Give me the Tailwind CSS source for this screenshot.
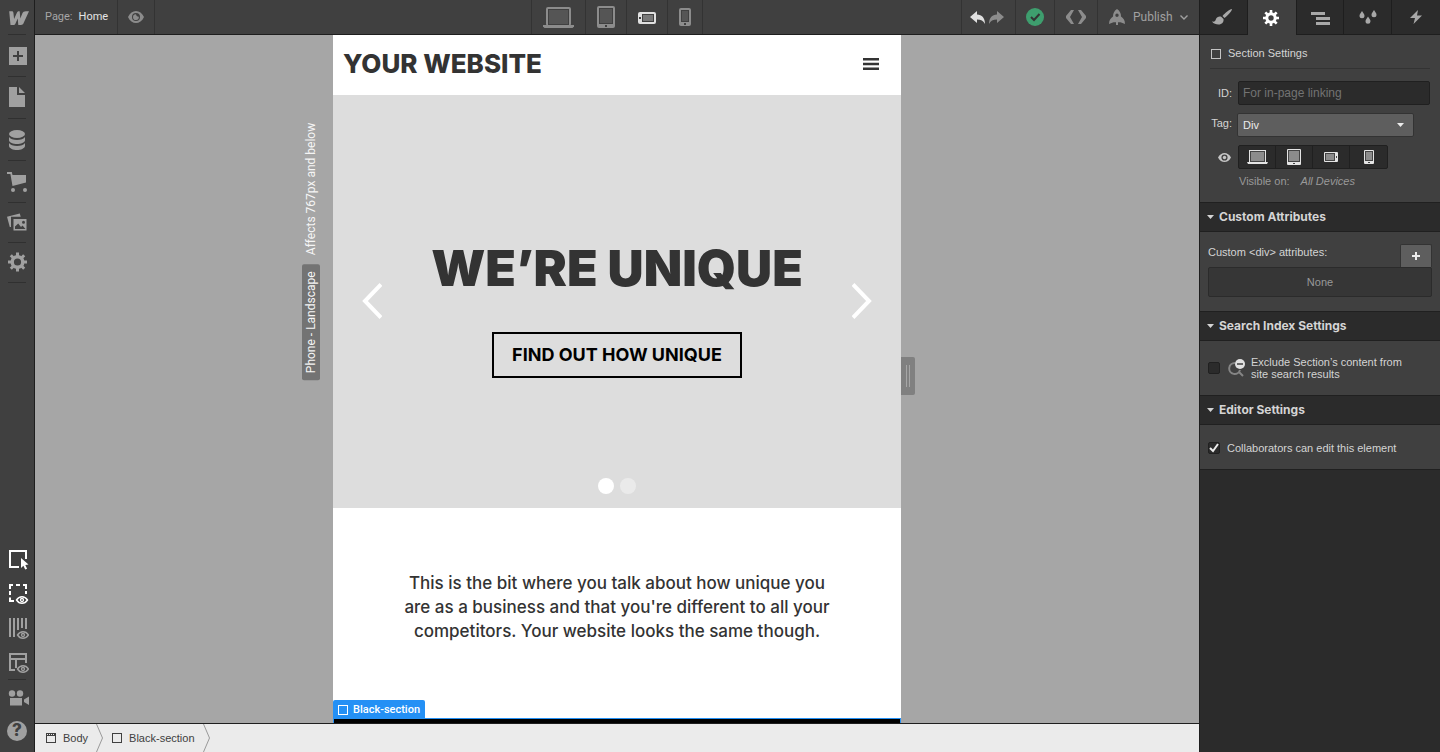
<!doctype html>
<html lang="en">
  <head>
    <meta charset="UTF-8" />
    <meta name="viewport" content="width=device-width, initial-scale=1.0" />
    <title>Designer</title>
    <script src="https://cdn.jsdelivr.net/npm/@tailwindcss/browser@4"></script>
  </head>
  <body class="flex h-screen overflow-hidden bg-[#404040] font-['Liberation_Sans',sans-serif] text-[11px] text-[#d4d4d4]">
    <!-- Left Sidebar -->
    <nav class="flex w-[35px] shrink-0 flex-col border-r border-[#1e1e1e] text-[#a0a0a0]" aria-label="Tools">
      <a href="#" class="flex h-[34px] items-center pl-[7px]" aria-label="Dashboard">
        <svg class="size-[22px]" viewBox="0 0 22 22" fill="currentColor">
          <path d="M2.2 5.2h2.6c1.1 0 1.5.6 1.6 1.5l.7 6.2 2.9-6.3c.5-1 1-1.4 2.2-1.4h.5l.6 7.4 2-5c.7-1.7 1.800-2.400 3.600-2.400H22l-5.600 12.400c-.5 1-1.300 1.400-2.400 1.400h-2.700l-.6-6.600-2.200 5.100c-.5 1.100-1.200 1.500-2.300 1.500H3.500z" />
        </svg>
      </a>
      <hr class="ml-2 w-[18px] border-[#303030]" />
      <button class="flex h-[41px] items-center pl-[7px]" aria-label="Add elements">
        <svg class="size-[22px]" viewBox="0 0 22 22" fill="currentColor">
          <path fill-rule="evenodd" d="M2 2h18v18H2zM10 6v4H6v2h4v4h2v-4h4v-2h-4V6z" />
        </svg>
      </button>
      <hr class="ml-2 w-[18px] border-[#303030]" />
      <button class="flex h-[41px] items-center pl-[7px]" aria-label="Pages">
        <svg class="size-[22px]" viewBox="0 0 22 22" fill="currentColor">
          <path d="M2 0h8v8h8v12H2zM12 0l6 6h-6z" />
        </svg>
      </button>
      <hr class="ml-2 w-[18px] border-[#303030]" />
      <button class="flex h-[41px] items-center pl-[7px]" aria-label="CMS collections">
        <svg class="size-[22px]" viewBox="0 0 22 22" fill="currentColor">
          <ellipse cx="10" cy="5" rx="8" ry="4" />
          <path d="M2 8c1 2 4.500 3 8 3s7-1 8-3v3.500C17.500 13.500 14 15 10 15s-7.500-1.500-8-3.500zM2 14c1 2 4.500 3 8 3s7-1 8-3v3c-.5 2.500-4 4-8 4s-7.500-1.500-8-4z" />
        </svg>
      </button>
      <hr class="ml-2 w-[18px] border-[#303030]" />
      <button class="flex h-[41px] items-center pl-[7px]" aria-label="Ecommerce">
        <svg class="size-[22px]" viewBox="0 0 22 22" fill="currentColor">
          <path d="M0 1h4.800l.7 3H19v7.500L5.500 15 3.400 3H0z" />
          <circle cx="6" cy="19" r="2" />
          <circle cx="18" cy="19" r="2" />
        </svg>
      </button>
      <hr class="ml-2 w-[18px] border-[#303030]" />
      <button class="flex h-[39px] items-center pl-[7px]" aria-label="Assets">
        <svg class="size-[22px]" viewBox="0 0 22 22" fill="currentColor">
          <path d="M0 4.800 12.800 1.500l.9 3.300H4v10.300H2.800z" />
          <path fill-rule="evenodd" d="M6.500 7h13v11.500h-13zM8 17h10.500l-3-3.500-1.500 1.500-2.800-3.500L8 14.500zM16.500 8.800a1.500 1.500 0 1 0 0 3 1.500 1.500 0 0 0 0-3z" />
        </svg>
      </button>
      <hr class="ml-2 w-[18px] border-[#303030]" />
      <button class="flex h-[39px] items-center pl-[7px]" aria-label="Project settings">
        <svg class="size-[22px]" viewBox="0 0 22 22">
          <circle cx="10.500" cy="10" r="5.300" fill="none" stroke="currentColor" stroke-width="3.400" />
          <path d="M10.500.5V4M10.500 16v3.500M1 10h3.500M16.500 10H20M3.800 3.300l2.400 2.400M14.800 14.300l2.400 2.400M17.200 3.300l-2.400 2.400M6.200 14.300l-2.400 2.400" stroke="currentColor" stroke-width="3" />
        </svg>
      </button>
      <hr class="ml-2 w-[18px] border-[#303030]" />

      <div class="mt-auto flex flex-col pb-1">
        <button class="flex h-[34px] items-center pl-[7px] text-white" aria-label="Select">
          <svg class="size-[22px]" viewBox="0 0 22 22">
            <path d="M12 18H3V2h16v8" fill="none" stroke="currentColor" stroke-width="2" />
            <path d="m14 9 7.500 6.500-3.200.4 1.800 3.800-1.900.9-1.800-3.900L14 19z" fill="currentColor" />
          </svg>
        </button>
        <button class="flex h-[34px] items-center pl-[7px] text-white" aria-label="Show element edges">
          <svg class="size-[22px]" viewBox="0 0 22 22" fill="none" stroke="currentColor">
            <path d="M3 6V2h3M9 2h4M16 2h3v4M3 8v4M19 8v3M3 14.500V18h4" stroke-width="2" />
            <path d="M9.500 17c2.800-4.300 8.200-4.300 11 0-2.800 4.300-8.200 4.300-11 0z" stroke-width="1.400" />
            <circle cx="15" cy="17" r="1.500" stroke-width="1.300" />
          </svg>
        </button>
        <button class="flex h-[34px] items-center pl-[7px]" aria-label="Show grid overlay">
          <svg class="size-[22px]" viewBox="0 0 22 22" fill="none" stroke="currentColor">
            <path d="M3 1v19M7 1v19M11 1v12M15 1v10M19 1v11" stroke-width="2" />
            <path d="M10.500 18c2.800-4.300 8.200-4.300 11 0-2.800 4.300-8.200 4.300-11 0z" stroke-width="1.400" />
            <circle cx="16" cy="18" r="1.500" stroke-width="1.300" />
          </svg>
        </button>
        <button class="flex h-[34px] items-center pl-[7px]" aria-label="Show layout">
          <svg class="size-[22px]" viewBox="0 0 22 22" fill="none" stroke="currentColor">
            <path d="M8 19H3V3h16v9M3 8h16M9 8v9" stroke-width="2" />
            <path d="M10.500 18c2.800-4.300 8.200-4.300 11 0-2.800 4.300-8.200 4.300-11 0z" stroke-width="1.400" />
            <circle cx="16" cy="18" r="1.500" stroke-width="1.300" />
          </svg>
        </button>
        <hr class="ml-2 w-[18px] border-[#303030]" />
        <button class="flex h-[34px] items-center pl-[7px]" aria-label="Video tutorials">
          <svg class="size-[22px]" viewBox="0 0 22 22" fill="currentColor">
            <circle cx="5" cy="7.500" r="3.200" />
            <circle cx="13" cy="7.500" r="3.200" />
            <path d="M3 12h12v7.500H3zM22 10.500v8.500l-5-3v-2.500z" />
          </svg>
        </button>
        <button class="flex h-[34px] items-center pl-[7px]" aria-label="Help">
          <span class="flex size-5 items-center justify-center rounded-full bg-[#a0a0a0] font-['Inter',sans-serif] text-[17px] font-extrabold text-[#404040]">?</span>
        </button>
      </div>
    </nav>

    <!-- Main Area -->
    <div class="flex min-w-0 flex-1 flex-col">
      <!-- Top Bar -->
      <header class="grid h-[35px] shrink-0 grid-cols-[1fr_auto_1fr] border-b border-[#1e1e1e] font-['Roboto',sans-serif]">
        <div class="flex">
          <button class="flex w-[83px] items-center gap-1.5 border-r border-[#333] pl-2.5 text-[#a6a6a6]">Page: <span class="text-[#e4e4e4]">Home</span></button>
          <button class="flex w-[37px] items-center justify-center border-r border-[#333] text-[#8c8c8c]" aria-label="Preview">
            <svg class="h-3 w-4" viewBox="0 0 16 12">
              <path fill="currentColor" fill-rule="evenodd" d="M0 6c3.500-8 12.500-8 16 0-3.500 8-12.500 8-16 0zM8 2a4 4 0 1 0 0 8 4 4 0 0 0 0-8z" />
              <path fill="currentColor" d="M8 3.200c.3 1.500 1 2.300 2.800 2.500A2.900 2.900 0 1 1 8 3.200z" />
            </svg>
          </button>
        </div>

        <!-- Breakpoints -->
        <div class="flex border-l border-[#333]">
          <button class="flex w-[54px] items-center justify-center border-r border-[#333]" aria-label="Desktop">
            <svg class="h-[22px] w-[31px]" viewBox="0 0 31 22">
              <rect x="4" y="2" width="23" height="17" rx="1" fill="#555" stroke="#8c8c8c" stroke-width="2" />
              <rect x="5.500" y="3.500" width="20" height="15" fill="none" stroke="#404040" />
              <path d="M0 19h31v1.500l-1.500 1.500h-28L0 20.500z" fill="#8c8c8c" />
            </svg>
          </button>
          <button class="flex w-[41px] items-center justify-center border-r border-[#333]" aria-label="Tablet">
            <svg class="h-[22px] w-[18px]" viewBox="0 0 18 22">
              <rect width="18" height="22" rx="2" fill="#8c8c8c" />
              <rect x="2.500" y="2.500" width="13" height="15" fill="#555" stroke="#404040" />
              <rect x="8" y="19" width="2" height="2" fill="#404040" />
            </svg>
          </button>
          <button class="flex w-[41px] items-center justify-center border-r border-[#333]" aria-label="Phone landscape">
            <svg class="mt-0.5 h-3 w-[18px]" viewBox="0 0 18 12">
              <rect width="18" height="12" rx="2" fill="#e0e0e0" />
              <rect x="4.500" y="2.500" width="11" height="7" fill="#777" stroke="#404040" />
              <rect x="1" y="5" width="2" height="2" fill="#404040" />
            </svg>
          </button>
          <button class="flex w-[35px] items-center justify-center border-r border-[#333]" aria-label="Phone portrait">
            <svg class="h-[18px] w-3" viewBox="0 0 12 18">
              <rect width="12" height="18" rx="2" fill="#8c8c8c" />
              <rect x="2.500" y="2.500" width="7" height="11" fill="#555" stroke="#404040" />
              <rect x="5" y="15" width="2" height="2" fill="#404040" />
            </svg>
          </button>
        </div>

        <div class="flex justify-end">
          <div class="flex w-[55px] items-center justify-center gap-1 border-x border-[#333] pr-1">
            <button class="text-[#e0e0e0]" aria-label="Undo">
              <svg class="h-[13px] w-[15px]" viewBox="0 0 15 13" fill="currentColor"><path d="M7 0v3.500c5 .3 8 3.500 8 9.500-1.500-3.200-4-4.500-8-4.500V12L0 6z" /></svg>
            </button>
            <button class="text-[#8c8c8c]" aria-label="Redo">
              <svg class="h-[13px] w-[15px]" viewBox="0 0 15 13" fill="currentColor"><path d="M8 0v3.500C3 3.800 0 7 0 13c1.500-3.200 4-4.500 8-4.500V12l7-6z" /></svg>
            </button>
          </div>
          <button class="flex w-[39px] items-center justify-center border-r border-[#333]" aria-label="All changes saved">
            <svg class="size-[18px]" viewBox="0 0 18 18">
              <circle cx="9" cy="9" r="9" fill="#3e9e6e" />
              <path d="m5 9 3 3 5.500-6" fill="none" stroke="#333" stroke-width="2" />
            </svg>
          </button>
          <button class="flex w-[43px] items-center justify-center border-r border-[#333] text-[#8c8c8c]" aria-label="Export code">
            <svg class="h-[14px] w-5" viewBox="0 0 20 14" fill="currentColor">
              <path d="M5 0h3L4 7l4 7H5L0 8V6zM15 0h-3l4 7-4 7h3l5-6V6z" />
            </svg>
          </button>
          <button class="flex w-[101px] items-center gap-[7px] pl-[10px] text-xs text-[#a0a0a0]">
            <svg class="h-4 w-[18px] text-[#8c8c8c]" viewBox="0 0 18 16" fill="currentColor">
              <path fill-rule="evenodd" d="M9 0c3 2 4 4.500 4 7.500 2 1.500 4 3.500 4 7.500l-4.500-1.800h-7L1 15c0-4 2-6 4-7.500C5 4.500 6 2 9 0zM9 4.500a1.700 1.700 0 1 0 0 3.400 1.700 1.700 0 0 0 0-3.400z" />
              <path d="M8 13h2v3H8z" />
            </svg>
            Publish
            <svg class="h-[5px] w-2" viewBox="0 0 8 5" fill="none" stroke="currentColor"><path d="m.5.5 3.500 3.500L7.500.5" stroke-width="1.400" /></svg>
          </button>
        </div>
      </header>

      <!-- Canvas -->
      <main class="flex min-h-0 flex-1 justify-center bg-[#a6a6a6]">
        <div class="relative flex w-[568px] flex-col bg-white text-[#333]">
          <div class="absolute top-[88px] right-full mr-[13px] flex rotate-180 gap-[9px] font-['Roboto',sans-serif] text-xs leading-[18px] whitespace-nowrap text-[#f5f5f5] [writing-mode:vertical-rl]">
            <span class="rounded-xs bg-[#737373] px-[7px]">Phone - Landscape</span>
            <span>Affects 767px and below</span>
          </div>
          <button class="absolute top-[322px] left-full flex h-[38px] w-[14px] items-center justify-center gap-0.5 rounded-r-xs bg-[#808080]" aria-label="Resize canvas">
            <span class="h-[22px] w-px bg-[#a6a6a6]"></span>
            <span class="h-[22px] w-px bg-[#a6a6a6]"></span>
          </button>

          <div class="flex h-[60px] shrink-0 items-center justify-between pr-[22px] pb-0.5 pl-[10px] font-['Inter',sans-serif]">
            <a href="#" class="pb-0.5 text-[26px] font-extrabold">YOUR WEBSITE</a>
            <button aria-label="Menu">
              <svg class="h-3 w-4" viewBox="0 0 16 12" fill="#333"><path d="M0 0h16v2.500H0zM0 4.700h16v2.500H0zM0 9.500h16V12H0z" /></svg>
            </button>
          </div>

          <section class="relative flex h-[413px] shrink-0 items-center justify-between bg-[#ddd] px-[29px] pb-0.5 font-['Inter',sans-serif]">
            <button aria-label="Previous slide">
              <svg class="h-9 w-5" viewBox="0 0 20 36" fill="none" stroke="#fff" stroke-width="4"><path d="M19 1.500 3 18l16 16.500" /></svg>
            </button>
            <div class="flex flex-col items-center gap-[34px] pt-[14px]">
              <h1 class="text-[50px] leading-[60px] font-black whitespace-nowrap">WE’RE UNIQUE</h1>
              <a href="#" class="border-2 border-black px-[18px] py-[9px] text-[18px] leading-6 font-bold whitespace-nowrap text-black">FIND OUT HOW UNIQUE</a>
            </div>
            <button aria-label="Next slide">
              <svg class="h-9 w-5" viewBox="0 0 20 36" fill="none" stroke="#fff" stroke-width="4"><path d="m1 1.500 16 16.500L1 34.500" /></svg>
            </button>
            <div class="absolute inset-x-0 bottom-[14px] flex justify-center gap-1.5">
              <button class="size-4 rounded-full bg-white" aria-label="Slide 1"></button>
              <button class="size-4 rounded-full bg-white/40" aria-label="Slide 2"></button>
            </div>
          </section>

          <section class="px-10 pt-[63px] text-center font-['Inter',sans-serif] text-[17px] leading-6 font-medium">
            <p>This is the bit where you talk about how unique you<br />are as a business and that you're different to all your<br />competitors. Your website looks the same though.</p>
          </section>

          <div class="mt-auto">
            <div class="inline-flex h-[18px] items-center gap-[5px] rounded-t-xs bg-[#2490f5] px-[5px] pt-0.5 align-top font-['Roboto',sans-serif] text-[11px] font-medium text-white">
              <span class="size-2.5 border border-white"></span>
              Black-section
            </div>
            <div class="h-[5px] border border-b-0 border-[#2490f5] bg-black"></div>
          </div>
        </div>
      </main>

      <!-- Breadcrumbs -->
      <footer class="flex h-[29px] shrink-0 items-center border-t border-[#1e1e1e] bg-[#ebebeb] text-[#404040]">
        <a href="#" class="flex items-center gap-[7px] pl-[11px]">
          <svg class="size-2.5" viewBox="0 0 10 10" fill="#404040">
            <path fill-rule="evenodd" d="M0 0h10v10H0zM1 3v6h8V3zM1 1v1h1V1zM3 1v1h1V1zM5 1v1h1V1zM7 1v1h1V1z" />
          </svg>
          Body
        </a>
        <svg class="ml-2 h-7 w-[7px]" viewBox="0 0 7 28" fill="none" stroke="#999"><path d="m.5 0 6 14-6 14" /></svg>
        <a href="#" class="flex items-center gap-[7px] pl-[9px]">
          <span class="size-2.5 border border-[#404040]"></span>
          Black-section
        </a>
        <svg class="ml-2 h-7 w-[7px]" viewBox="0 0 7 28" fill="none" stroke="#999"><path d="m.5 0 6 14-6 14" /></svg>
      </footer>
    </div>

    <!-- Right Panel -->
    <aside class="flex w-[241px] shrink-0 flex-col border-l border-[#1e1e1e] bg-[#2b2b2b]">
      <div class="grid h-[35px] shrink-0 grid-cols-5 text-[#a8a8a8]">
        <button class="flex items-center justify-center border-r border-b border-[#1e1e1e] pr-1" aria-label="Style">
          <svg class="h-4 w-5" viewBox="0 0 20 16" fill="currentColor">
            <path d="M20 0c0 2-4 6.500-7.500 9l-2-2C13 4 17.500 0 20 0zM9.500 8l2 2c.5 3-1.500 5.500-5 5.500-2.500 0-5-.8-6.500-3 2.500.5 3.500-.5 4-2.500.7-2 3.500-3 5.500-2z" />
          </svg>
        </button>
        <button class="flex items-center justify-center bg-[#404040] pr-0.5 text-white" aria-label="Settings">
          <svg class="size-4" viewBox="0 0 16 16" stroke="currentColor">
            <circle cx="8" cy="8" r="4.200" fill="none" stroke-width="3" />
            <path d="M8 0v3M8 13v3M0 8h3M13 8h3M2.300 2.300l2.200 2.200M11.500 11.500l2.200 2.200M13.700 2.300l-2.200 2.200M4.500 11.500l-2.200 2.200" stroke-width="2.600" />
          </svg>
        </button>
        <button class="flex items-center justify-center border-x border-b border-[#1e1e1e]" aria-label="Navigator">
          <svg class="mt-0.5 h-[13px] w-[19px]" viewBox="0 0 19 13" fill="currentColor"><path d="M0 0h14v3H0zM5 5h14v3H5zM5 10h14v3H5z" /></svg>
        </button>
        <button class="flex items-center justify-center border-r border-b border-[#1e1e1e]" aria-label="Style manager">
          <svg class="h-[14px] w-[18px]" viewBox="0 0 18 14" fill="currentColor">
            <path d="M3 1c1 1.800 2.500 3 2.500 4.800a2.500 2.500 0 0 1-5 0C.5 4 2 2.800 3 1zM15 0c1 1.800 2.500 3 2.500 4.800a2.500 2.500 0 0 1-5 0C12.500 3 14 1.800 15 0zM9 6.500c1 1.800 2.500 3 2.500 4.800a2.500 2.500 0 0 1-5 0C6.500 9.500 8 8.300 9 6.500z" />
          </svg>
        </button>
        <button class="flex items-center justify-center border-b border-[#1e1e1e]" aria-label="Interactions">
          <svg class="h-[14px] w-3" viewBox="0 0 12 14" fill="currentColor"><path d="M8 0 0 8h5l-1.500 6L12 5.500H7z" /></svg>
        </button>
      </div>

      <div class="flex flex-col bg-[#404040] pb-[14px]">
        <div class="mx-[10px] flex h-[34px] items-center gap-[7px] border-b border-[#333] pt-1">
          <span class="ml-px size-2.5 border border-[#c4c4c4]"></span>
          <h2>Section Settings</h2>
        </div>
        <div class="mt-3 flex items-center gap-1.5 pr-[10px]">
          <label for="element-id" class="w-8 text-right">ID:</label>
          <input id="element-id" type="text" placeholder="For in-page linking" class="h-6 min-w-0 flex-1 rounded-xs border border-[#202020] bg-[#2b2b2b] px-1 text-xs placeholder:text-[#737373]" />
        </div>
        <div class="mt-2 flex items-start gap-[5px]">
          <label for="element-tag" class="w-8 pt-[3px] text-right leading-[14px]">Tag:</label>
          <div class="relative">
            <select id="element-tag" class="h-6 w-[177px] appearance-none rounded-xs border border-[#333] bg-[#5e5e5e] px-[5px] text-[#ececec]">
              <option>Div</option>
              <option>Section</option>
            </select>
            <svg class="pointer-events-none absolute top-2.5 right-[10px] h-1 w-[7px]" viewBox="0 0 7 4" fill="#ececec"><path d="M0 0h7L3.500 4z" /></svg>
          </div>
        </div>
        <div class="mt-2 flex items-center gap-[7px] pl-[18px]">
          <svg class="h-[9px] w-[13px]" viewBox="0 0 13 9">
            <path fill="#c4c4c4" fill-rule="evenodd" d="M0 4.500C3-1.500 10-1.500 13 4.500c-3 6-10 6-13 0zM6.500 1.400a3.100 3.100 0 1 0 0 6.200 3.100 3.100 0 0 0 0-6.200z" />
            <circle cx="6.500" cy="4.500" r="1.700" fill="#c4c4c4" />
          </svg>
          <div class="flex h-6 divide-x divide-[#202020] rounded-xs border border-[#202020] bg-[#2b2b2b]">
            <button class="flex w-[37px] items-center justify-center" aria-label="Visible on desktop">
              <svg class="h-[14px] w-[21px]" viewBox="0 0 21 14">
                <rect x="2.500" y=".5" width="16" height="12" fill="#8c8c8c" stroke="#e4e4e4" />
                <rect x="3.500" y="1.500" width="14" height="10" fill="none" stroke="#444" />
                <path d="M0 12h21l-1 2H1z" fill="#e4e4e4" />
              </svg>
            </button>
            <button class="flex w-[37px] items-center justify-center" aria-label="Visible on tablet">
              <svg class="h-4 w-[14px]" viewBox="0 0 14 16">
                <rect width="14" height="16" rx="1" fill="#e4e4e4" />
                <rect x="1.500" y="1.500" width="11" height="11" fill="#8c8c8c" stroke="#444" />
                <path d="M6 14h2v1H6z" fill="#444" />
              </svg>
            </button>
            <button class="flex w-[37px] items-center justify-center" aria-label="Visible on phone landscape">
              <svg class="h-2.5 w-[14px]" viewBox="0 0 14 10">
                <rect width="14" height="10" rx="1" fill="#e4e4e4" />
                <rect x="1.500" y="1.500" width="9" height="7" fill="#8c8c8c" stroke="#444" />
                <path d="M12 4h1v2h-1z" fill="#444" />
              </svg>
            </button>
            <button class="flex w-[37px] items-center justify-center" aria-label="Visible on phone portrait">
              <svg class="h-[14px] w-2.5" viewBox="0 0 10 14">
                <rect width="10" height="14" rx="1" fill="#e4e4e4" />
                <rect x="1.500" y="1.500" width="7" height="9" fill="#8c8c8c" stroke="#444" />
                <path d="M4 12h2v1H4z" fill="#444" />
              </svg>
            </button>
          </div>
        </div>
        <p class="mt-[5px] flex gap-[11px] pl-[39px] leading-[14px] text-[#999]">Visible on: <em>All Devices</em></p>
      </div>

      <button class="flex h-[30px] shrink-0 items-center gap-[5px] border-y border-[#202020] pl-[7px] font-['Inter',sans-serif] text-xs font-bold text-[#d4d4d4]">
        <svg class="h-1 w-[7px]" viewBox="0 0 7 4" fill="currentColor"><path d="M0 0h7L3.500 4z" /></svg>
        Custom Attributes
      </button>
      <div class="bg-[#404040] px-2 pt-3 pb-[14px]">
        <div class="flex items-start justify-between">
          <p class="pt-px leading-[14px]">Custom &lt;div&gt; attributes:</p>
          <button class="flex h-[23px] w-8 items-center justify-center rounded-t-xs border border-b-0 border-[#333] bg-[#5e5e5e]" aria-label="Add attribute">
            <svg class="size-2" viewBox="0 0 8 8" fill="#ececec"><path d="M3 0h2v3h3v2H5v3H3V5H0V3h3z" /></svg>
          </button>
        </div>
        <div class="flex h-[30px] items-center justify-center rounded-xs border border-[#2b2b2b] bg-[#363636] text-[#999]">None</div>
      </div>

      <button class="flex h-[30px] shrink-0 items-center gap-[5px] border-y border-[#202020] pl-[7px] font-['Inter',sans-serif] text-xs font-bold text-[#d4d4d4]">
        <svg class="h-1 w-[7px]" viewBox="0 0 7 4" fill="currentColor"><path d="M0 0h7L3.500 4z" /></svg>
        Search Index Settings
      </button>
      <div class="flex h-[54px] shrink-0 items-center bg-[#404040] px-2">
        <input id="exclude-search" type="checkbox" class="size-3 appearance-none rounded-xs border border-[#202020] bg-[#2b2b2b]" />
        <label for="exclude-search" class="flex items-center gap-1.5 pl-2 leading-3">
          <svg class="h-5 w-[17px]" viewBox="0 0 17 20">
            <path d="M7 5a5.500 5.500 0 1 0 5 7M10.500 13.500l4.500 4.500" fill="none" stroke="#858585" stroke-width="2" />
            <circle cx="12" cy="6" r="5" fill="#e0e0e0" />
            <path d="M9 5h6v2H9z" fill="#666" />
          </svg>
          <span>Exclude Section’s content from<br />site search results</span>
        </label>
      </div>

      <button class="flex h-[30px] shrink-0 items-center gap-[5px] border-y border-[#202020] pl-[7px] font-['Inter',sans-serif] text-xs font-bold text-[#d4d4d4]">
        <svg class="h-1 w-[7px]" viewBox="0 0 7 4" fill="currentColor"><path d="M0 0h7L3.500 4z" /></svg>
        Editor Settings
      </button>
      <div class="flex h-[45px] shrink-0 items-center gap-[7px] border-b border-[#202020] bg-[#404040] px-2 pt-0.5">
        <div class="relative flex">
          <input id="can-edit" type="checkbox" checked class="size-3 appearance-none rounded-xs border border-[#202020] bg-[#2b2b2b]" />
          <svg class="pointer-events-none absolute inset-0 size-3" viewBox="0 0 12 12" fill="none" stroke="#ececec" stroke-width="2"><path d="m2 6 3 3 5-7" /></svg>
        </div>
        <label for="can-edit">Collaborators can edit this element</label>
      </div>
    </aside>
  </body>
</html>
